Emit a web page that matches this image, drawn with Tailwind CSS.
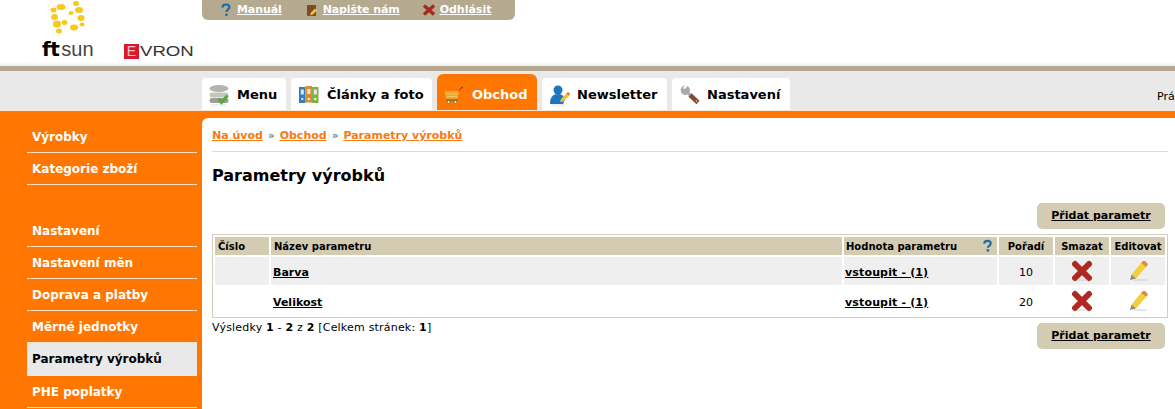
<!DOCTYPE html>
<html lang="cs">

<head>
    <meta charset="UTF-8">
    <title>Parametry výrobků</title>
    <script src="https://cdn.jsdelivr.net/npm/@tailwindcss/browser@4"></script>
</head>

<body class="h-[409px] w-[1175px] overflow-hidden bg-white font-['DejaVu_Sans',sans-serif] text-[11px] text-black">
    <!-- header -->
    <header class="flex h-[62px]">
        <div class="w-[202px] shrink-0">
            <svg class="ml-[50px] block" width="36" height="35" viewBox="50 0 36 35" fill="#f8c91c">
                <ellipse cx="53.500" cy="10" rx="3" ry="2.500" />
                <ellipse cx="61" cy="7" rx="4.500" ry="3" />
                <ellipse cx="76" cy="3.500" rx="3" ry="2.500" />
                <ellipse cx="79" cy="10" rx="4" ry="3" />
                <ellipse cx="71" cy="13" rx="2.500" ry="2" />
                <ellipse cx="54.500" cy="17" rx="3.500" ry="3" />
                <ellipse cx="81" cy="18" rx="3.500" ry="3" />
                <ellipse cx="57" cy="24" rx="4" ry="3.500" />
                <ellipse cx="64.500" cy="22.500" rx="3" ry="2.500" />
                <ellipse cx="82" cy="24.500" rx="2.500" ry="2" />
                <ellipse cx="74" cy="27.500" rx="4" ry="3" />
                <ellipse cx="59" cy="31" rx="3" ry="2.500" />
            </svg>
            <div class="mt-[5px] flex items-end pl-[42px]">
                <div class="flex h-[19px] w-[82px] items-baseline text-[20px] leading-[19px]">
                    <span class="font-bold tracking-[-0.5px]">ft</span><span class="ml-[2px] font-['Liberation_Sans',sans-serif] font-normal text-[#444]">sun</span>
                </div>
                <div class="flex h-[15px] items-center font-['Liberation_Sans',sans-serif] text-[14px] leading-[15px] text-[#333]">
                    <span class="flex h-[15px] w-[15px] items-center justify-center bg-[#d8182c] text-[#f5c0c4]">E</span><span class="ml-[1px] inline-block origin-left scale-x-[1.33]">VRON</span>
                </div>
            </div>
        </div>
        <nav class="flex h-[20px] w-[313px] items-center rounded-b-[6px] bg-[#b5a98f] pl-[18px] font-bold text-white">
            <svg class="mr-[5px]" width="12" height="14" viewBox="0 0 12 14">
                <path d="M2.500 4.500C2.500 2.500 4 1.500 6 1.500S9.500 2.700 9.500 4.300C9.500 6.500 6.500 6.500 6.500 9" fill="none" stroke="#1d6ca8" stroke-width="2.200" />
                <circle cx="6.400" cy="11.800" r="1.400" fill="#1d6ca8" />
            </svg>
            <a class="mr-[24px] underline tracking-[-0.1px]" href="#">Manuál</a>
            <svg class="mr-[5px]" width="12" height="13" viewBox="0 0 12 13">
                <rect x="1" y="1" width="9" height="11" rx="1" fill="#7a4a2c" />
                <path d="M4 11.500l1-3 4-4 2 2-4 4z" fill="#f2c230" />
            </svg>
            <a class="mr-[22px] underline tracking-[-0.1px]" href="#">Napište nám</a>
            <svg class="mr-[4px]" width="14" height="12" viewBox="0 0 14 12">
                <path d="M2 1.500l10 9M12 1.500L2 10.500" stroke="#a52a22" stroke-width="3.400" />
            </svg>
            <a class="underline" href="#">Odhlásit</a>
        </nav>
    </header>
    <div class="h-[4px] bg-linear-to-b from-white to-[#eeeeee]"></div>

    <div class="h-[5px] bg-[#b5a98f]"></div>

    <!-- tabs -->
    <div class="flex h-[39px] items-end gap-[5px] overflow-hidden whitespace-nowrap bg-[#e9e9e9] pl-[202px] text-[13px] font-bold">
        <a class="flex h-[32px] w-[84px] shrink-0 items-center rounded-t-[4px] bg-white pl-[7px] pt-[2px]" href="#">
            <svg class="mr-[8px]" width="20" height="21" viewBox="0 0 20 21">
                <ellipse cx="10" cy="3.500" rx="9.500" ry="3.500" fill="#b4b4ae" />
                <rect x="0.500" y="7.500" width="19" height="5" rx="2.500" fill="#c6c6c0" />
                <rect x="0.500" y="13" width="19" height="5" rx="2.500" fill="#9e9e98" />
                <path d="M9.500 14l3 3.500 6-7" fill="none" stroke="#5da63a" stroke-width="3.200" />
                <path d="M2 20h16" stroke="#ddd" stroke-width="1" />
            </svg>
            Menu
        </a>
        <a class="flex h-[32px] w-[141px] shrink-0 items-center rounded-t-[4px] bg-white pl-[8px] pt-[2px]" href="#">
            <svg class="mr-[8px]" width="20" height="18" viewBox="0 0 20 18">
                <path d="M0 1h6.500v16H0z" fill="#2f7fc0" />
                <path d="M6.500 0H13v16.500H6.500z" fill="#e08a2c" />
                <path d="M13 1h6.500v16H13z" fill="#7fb04a" />
                <rect x="1.800" y="3.500" width="3" height="5" fill="#e8e8e8" />
                <rect x="8.300" y="3" width="3" height="5" fill="#e8e8e8" />
                <rect x="14.800" y="3.500" width="3" height="5" fill="#e8e8e8" />
                <circle cx="3.300" cy="13" r="1.200" fill="#dde" />
                <circle cx="9.800" cy="13" r="1.200" fill="#eee" />
                <circle cx="16.300" cy="13" r="1.200" fill="#eee" />
            </svg>
            Články a foto
        </a>
        <a class="flex h-[36px] w-[100px] shrink-0 items-center rounded-t-[6px] bg-[#ff7700] pl-[7px] pt-[5px] text-white" href="#">
            <svg class="mr-[9px]" width="19" height="18" viewBox="0 0 19 18">
                <path d="M0 5h15l-1.500 8H2z" fill="#e8a62c" />
                <path d="M2 8h12M2.500 10.500h11" stroke="#f6c860" stroke-width="1" />
                <path d="M15 5l2-3" stroke="#8a4a14" stroke-width="1" />
                <rect x="2" y="13.500" width="12" height="1.500" fill="#b55f10" />
                <circle cx="4.500" cy="16" r="1.500" fill="#fff2d8" stroke="#6b4a2a" stroke-width="0.600" />
                <circle cx="11.500" cy="16" r="1.500" fill="#fff2d8" stroke="#6b4a2a" stroke-width="0.600" />
                <circle cx="18" cy="1.500" r="1" fill="#d22" />
            </svg>
            Obchod
        </a>
        <a class="flex h-[32px] w-[125px] shrink-0 items-center rounded-t-[4px] bg-white pl-[8px] pt-[2px]" href="#">
            <svg class="mr-[7px]" width="20" height="21" viewBox="0 0 20 21">
                <circle cx="8" cy="5" r="4.500" fill="#1d75bd" />
                <path d="M0 19c0-7 3-10 8-10 4 0 6 2 7 6l-2 4z" fill="#1d75bd" />
                <path d="M10 17l1-3 6-6 2.500 2.500-6 6z" fill="#f2c230" />
                <path d="M16.500 8.500l1.500-1.500 2 2-1.500 1.500z" fill="#d9722c" />
                <path d="M1 20h14" stroke="#ddd" stroke-width="1" />
            </svg>
            Newsletter
        </a>
        <a class="flex h-[32px] w-[118px] shrink-0 items-center rounded-t-[4px] bg-white pl-[8px] pt-[2px]" href="#">
            <svg class="mr-[7px]" width="20" height="20" viewBox="0 0 20 20">
                <path d="M5 0.500C1.500 1 0 4 1 7c1 2.500 4 3.500 6.500 2.500L9 11l2-2-1.500-1.500C10.500 5 9.500 2 7.500 1L5 4 2.800 3.200z" fill="#a9a9a9" />
                <path d="M10 10l8 7.500" stroke="#85493a" stroke-width="4.500" />
                <circle cx="16.500" cy="16" r="0.800" fill="#e8d8c8" />
            </svg>
            Nastavení
        </a>
        <span class="mb-[5px] ml-[362px] shrink-0 text-[11px] font-normal">Prá</span>
    </div>

    <div class="flex h-[299px] border-t border-[#f5ead8] bg-[#ff7700]">
        <!-- side menu -->
        <aside class="w-[202px] shrink-0 pl-[27px] pr-[5px] pt-[10px] text-[12px] font-bold leading-[14px] text-white">
            <a class="block h-[32px] border-b border-white/80 pl-[5px] pt-[9px]" href="#">Výrobky</a>
            <a class="block h-[32px] border-b border-white/80 pl-[5px] pt-[9px]" href="#">Kategorie zboží</a>
            <a class="mt-[30px] block h-[32px] border-b border-white/80 pl-[5px] pt-[9px]" href="#">Nastavení</a>
            <a class="block h-[32px] border-b border-white/80 pl-[5px] pt-[9px]" href="#">Nastavení měn</a>
            <a class="block h-[32px] border-b border-white/80 pl-[5px] pt-[9px]" href="#">Doprava a platby</a>
            <a class="block h-[32px] border-b border-white/80 pl-[5px] pt-[9px]" href="#">Měrné jednotky</a>
            <a class="block h-[33px] bg-[#e9e9e9] pl-[5px] pt-[9px] text-black" href="#">Parametry výrobků</a>
            <a class="block h-[32px] border-b border-white/80 pl-[5px] pt-[9px]" href="#">PHE poplatky</a>
        </aside>

        <!-- content -->
        <main class="mt-[7px] flex-1 rounded-tl-[6px] bg-white pl-[10px] pr-[7px]">
            <div class="h-[34px] border-b border-[#dcdcdc] pt-[11px] leading-[13px] text-[#555]">
                <a class="font-bold text-[#f57a14] underline" href="#">Na úvod</a><span class="mx-[1.500px]"> » </span><a class="font-bold text-[#f57a14] underline" href="#">Obchod</a><span class="mx-[1.500px]"> » </span><a class="font-bold text-[#f57a14] underline" href="#">Parametry výrobků</a>
            </div>
            <h1 class="mt-[14px] text-[16px] font-bold leading-[19px]">Parametry výrobků</h1>
            <div class="mt-[18px] flex justify-end pr-[3px]">
                <a class="flex h-[26px] w-[128px] items-center justify-center rounded-[5px] bg-[#d4cbb3] pt-[1px] font-bold underline" href="#">Přidat parametr</a>
            </div>
            <table class="mt-[5px] w-[956px] table-fixed border-separate border-spacing-[2px] border border-[#d4cdb8]">
                <colgroup>
                    <col class="w-[54px]">
                    <col>
                    <col class="w-[153px]">
                    <col class="w-[54px]">
                    <col class="w-[54px]">
                    <col class="w-[54px]">
                </colgroup>
                <thead class="bg-[#d4cbb3] text-[10px] font-bold">
                    <tr class="h-[18px]">
                        <th class="pl-[3px] text-left font-bold">Číslo</th>
                        <th class="pl-[3px] text-left font-bold">Název parametru</th>
                        <th class="px-[2px] text-left font-bold">
                            <div class="flex items-center justify-between">
                                Hodnota parametru
                                <svg class="mr-[2px]" width="11" height="14" viewBox="0 0 12 14">
                                    <path d="M2.500 4.500C2.500 2.500 4 1.500 6 1.500S9.500 2.700 9.500 4.300C9.500 6.500 6.500 6.500 6.500 9" fill="none" stroke="#1d6ca8" stroke-width="2.400" />
                                    <circle cx="6.400" cy="11.800" r="1.500" fill="#1d6ca8" />
                                </svg>
                            </div>
                        </th>
                        <th class="text-center font-bold">Pořadí</th>
                        <th class="text-center font-bold">Smazat</th>
                        <th class="text-center font-bold">Editovat</th>
                    </tr>
                </thead>
                <tbody>
                    <tr class="h-[28px] bg-[#efefef]">
                        <td></td>
                        <td class="pl-[2px] pt-[4px] font-bold"><a class="underline" href="#">Barva</a></td>
                        <td class="pl-[1px] pt-[4px] font-bold tracking-[0.15px]"><a class="underline" href="#">vstoupit - (1)</a></td>
                        <td class="pt-[4px] text-center">10</td>
                        <td>
                            <svg class="mx-auto block" width="22" height="22" viewBox="0 0 22 22">
                                <path d="M4 4l14 14M18 4L4 18" stroke="#b0281f" stroke-width="6" stroke-linecap="round" />
                                <path d="M6 20h10" stroke="#ccc" stroke-width="1" />
                            </svg>
                        </td>
                        <td>
                            <svg class="mx-auto block" width="19" height="20" viewBox="0 0 19 20">
                                <path d="M2.500 13.500L12 2l5 4L7 17.500z" fill="#f4cf3d" />
                                <path d="M12 2l1.500-1.500a2 2 0 0 1 3 0l1.500 1.500a2 2 0 0 1 0 3L17 6z" fill="#e08a3c" />
                                <path d="M2.500 13.500L7 17.500l-6 1.500z" fill="#8a8a80" />
                                <path d="M5 19h13" stroke="#ccc" stroke-width="1" />
                            </svg>
                        </td>
                    </tr>
                    <tr class="h-[28px]">
                        <td></td>
                        <td class="pl-[2px] pt-[4px] font-bold"><a class="underline" href="#">Velikost</a></td>
                        <td class="pl-[1px] pt-[4px] font-bold tracking-[0.15px]"><a class="underline" href="#">vstoupit - (1)</a></td>
                        <td class="pt-[4px] text-center">20</td>
                        <td>
                            <svg class="mx-auto block" width="22" height="22" viewBox="0 0 22 22">
                                <path d="M4 4l14 14M18 4L4 18" stroke="#b0281f" stroke-width="6" stroke-linecap="round" />
                                <path d="M6 20h10" stroke="#ccc" stroke-width="1" />
                            </svg>
                        </td>
                        <td>
                            <svg class="mx-auto block" width="19" height="20" viewBox="0 0 19 20">
                                <path d="M2.500 13.500L12 2l5 4L7 17.500z" fill="#f4cf3d" />
                                <path d="M12 2l1.500-1.500a2 2 0 0 1 3 0l1.500 1.500a2 2 0 0 1 0 3L17 6z" fill="#e08a3c" />
                                <path d="M2.500 13.500L7 17.500l-6 1.500z" fill="#8a8a80" />
                                <path d="M5 19h13" stroke="#ccc" stroke-width="1" />
                            </svg>
                        </td>
                    </tr>
                </tbody>
            </table>
            <div class="flex items-start justify-between pr-[3px]">
                <p class="mt-[3px] leading-[13px] tracking-[0.2px]">Výsledky <b>1</b> - <b>2</b> z <b>2</b> [Celkem stránek: <b>1</b>]</p>
                <a class="mt-[5px] flex h-[26px] w-[128px] items-center justify-center rounded-[5px] bg-[#d4cbb3] pt-[1px] font-bold underline" href="#">Přidat parametr</a>
            </div>
        </main>
    </div>
</body>

</html>
